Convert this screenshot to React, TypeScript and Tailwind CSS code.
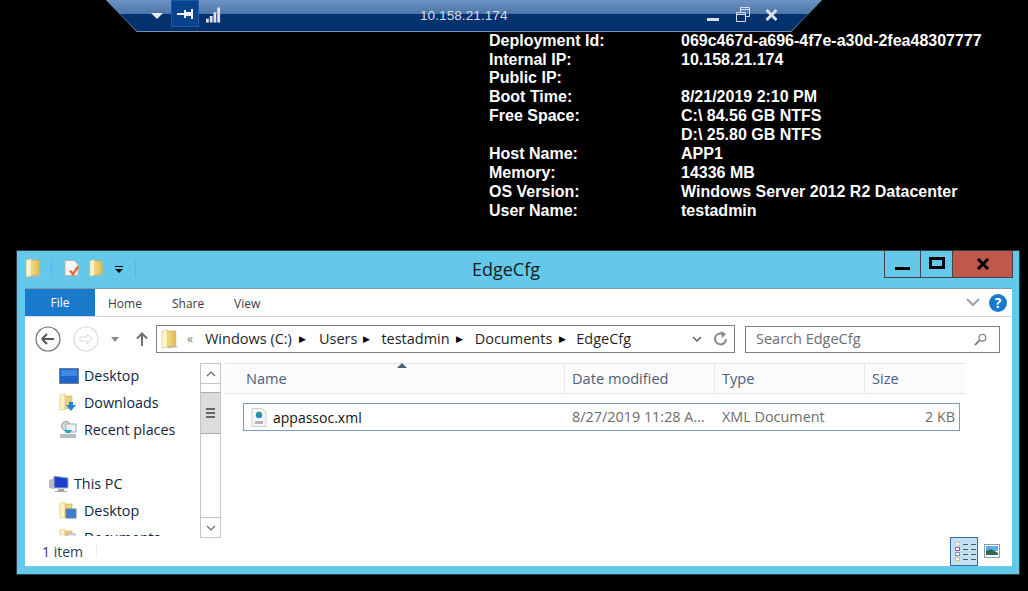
import React from "react";

const F = "font-['Open_Sans','Noto_Sans',sans-serif]";

function Folder({ className = "" }: { className?: string }) {
  return (
    <svg viewBox="0 0 17 19" className={className}>
      <defs>
        <linearGradient id="fg" x1="0" y1="0" x2="1" y2="0">
          <stop offset="0" stopColor="#f3dc8e" />
          <stop offset="1" stopColor="#e0bb52" />
        </linearGradient>
      </defs>
      <path d="M5 2H14V16L5 17Z" fill="url(#fg)" stroke="#c9a548" strokeWidth=".6" />
      <path d="M1 2L6 .6V17L1 18.4Z" fill="#fdf4c8" stroke="#dcc273" strokeWidth=".6" />
      <path d="M14 16L16.5 17L7 18.4L6 17Z" fill="#b9b7ad" />
    </svg>
  );
}

function TopBar() {
  return (
    <div className="ml-[106px] h-[32px] w-[716px] shrink-0 bg-[#7d93b0] [clip-path:polygon(0_0,100%_0,95.7%_100%,4.3%_100%)]">
      <div className="flex h-[31px] items-center bg-[linear-gradient(#6d93c2_0,#4c76a9_45%,#03326f_46%,#03326f_100%)] [clip-path:polygon(0_0,100%_0,95.7%_100%,4.3%_100%)]">
        <svg viewBox="0 0 12 8" className="ml-[45px] mt-[1px] h-[8px] w-[12px]">
          <path d="M0 1H12L6 7Z" fill="#e8ecf2" />
        </svg>
        <div className="ml-[8px] flex h-[27px] w-[28px] items-center justify-center self-start border border-[#1d5aa4] bg-[#07438e]">
          <svg viewBox="0 0 17 12" className="h-[12px] w-[17px]">
            <path d="M0 5H8V7H0ZM7 2H9V10H7ZM9 4H14V8H9ZM14 1H16V11H14Z" fill="#eef1f5" />
          </svg>
        </div>
        <svg viewBox="0 0 16 16" className="ml-[7px] mt-[-2px] h-[16px] w-[15px]">
          <path d="M0 12H3V16H0ZM4 9H7V16H4ZM8 5H11V16H8ZM12 0H15V16H12Z" fill="#dfe3e8" />
        </svg>
        <span className="ml-[199px] mt-[2px] font-['Liberation_Sans',sans-serif] text-[13.7px] text-[#d4dde8]">10.158.21.174</span>
        <svg viewBox="0 0 12 4" className="ml-[199px] mt-[9px] h-[4px] w-[12px]">
          <rect width="12" height="3" fill="#d9dee5" />
        </svg>
        <svg viewBox="0 0 14 15" className="ml-[17px] mt-[-2px] h-[15px] w-[14px]">
          <path d="M.5 5.5H9.5V14.5H.5ZM.5 7.5H9.5M4.5 5V.5H13.5V9.5H10M4.5 2.5H13.5" fill="none" stroke="#d9dee5" />
        </svg>
        <svg viewBox="0 0 13 12" className="ml-[15px] mt-[-2px] h-[12px] w-[13px]">
          <path d="M1.5 1 L11.5 11 M11.5 1 L1.5 11" stroke="#d9dee5" strokeWidth="3" />
        </svg>
      </div>
    </div>
  );
}

const rows: [string, string][] = [
  ["Deployment Id:", "069c467d-a696-4f7e-a30d-2fea48307777"],
  ["Internal IP:", "10.158.21.174"],
  ["Public IP:", ""],
  ["Boot Time:", "8/21/2019 2:10 PM"],
  ["Free Space:", "C:\\ 84.56 GB NTFS"],
  ["", "D:\\ 25.80 GB NTFS"],
  ["Host Name:", "APP1"],
  ["Memory:", "14336 MB"],
  ["OS Version:", "Windows Server 2012 R2 Datacenter"],
  ["User Name:", "testadmin"],
];

function Info() {
  return (
    <div className="ml-[489px] mt-[-1.4px] grid h-[188px] shrink-0 grid-cols-[192px_1fr] auto-rows-[18.9px] font-['Liberation_Sans',sans-serif] text-[16px] font-bold leading-[19px] text-white">
      {rows.map(([a, b], i) => (
        <React.Fragment key={i}>
          <div>{a}</div>
          <div>{b}</div>
        </React.Fragment>
      ))}
    </div>
  );
}

function TitleBar() {
  return (
    <div className="flex h-[37px] shrink-0 items-start">
      <Folder className="ml-[8px] mt-[7px] h-[20px] w-[18px]" />
      <div className="ml-[8px] mt-[10px] h-[16px] w-px bg-[#7fa9bf]" />
      <svg viewBox="0 0 16 18" className="ml-[12px] mt-[8px] h-[19px] w-[16px]">
        <path d="M1 1H10L14 5V16H1Z" fill="#f7f7f7" stroke="#b9b4ae" />
        <path d="M6 11L9 15L14 7" fill="none" stroke="#e46f3d" strokeWidth="2.4" />
      </svg>
      <Folder className="ml-[9px] mt-[7px] h-[20px] w-[16px]" />
      <svg viewBox="0 0 8 7" className="ml-[10px] mt-[15px] h-[7px] w-[8px]">
        <path d="M0 0H8V1H0ZM0 3H8L4 7Z" fill="#000" />
      </svg>
      <div className="ml-[12px] mt-[10px] h-[16px] w-px bg-[#7fa9bf]" />
      <div className={`${F} ml-[310px] mt-[6px] w-[120px] text-center text-[18px] leading-[24px] text-[#1a1a1a]`}>EdgeCfg</div>
      <div className="ml-auto mr-[6px] flex h-[27px] border border-t-0 border-[#444]">
        <div className="flex w-[36px] items-center justify-center border-r border-[#444]">
          <div className="mt-[8px] h-[3px] w-[15px] bg-black" />
        </div>
        <div className="flex w-[32px] items-center justify-center border-r border-[#444]">
          <div className="mb-[3px] h-[12px] w-[16px] border-[3px] border-black" />
        </div>
        <div className="flex w-[59px] items-center justify-center bg-[#c1584e]">
          <svg viewBox="0 0 13 12" className="mb-[1px] h-[12px] w-[14px]">
            <path d="M1.5 1 L11.5 11 M11.5 1 L1.5 11" stroke="#000" strokeWidth="3" />
          </svg>
        </div>
      </div>
    </div>
  );
}

function Tabs() {
  return (
    <div className={`${F} flex h-[28px] shrink-0 items-center border-b border-[#dadbdc] text-[12px] text-[#3c3c3c]`}>
      <div className="flex h-full w-[70px] items-center justify-center bg-[#1979ca] text-white">File</div>
      <div className="ml-[13px] mt-[3px] w-[50px]">Home</div>
      <div className="ml-[14px] mt-[3px] w-[48px]">Share</div>
      <div className="ml-[14px] mt-[3px]">View</div>
      <svg viewBox="0 0 14 9" className="ml-auto mr-[9px] h-[9px] w-[14px]">
        <path d="M1 1L7 7L13 1" fill="none" stroke="#9aa0a6" strokeWidth="2" />
      </svg>
      <div className="mr-[5px] flex h-[18px] w-[18px] items-center justify-center rounded-full bg-[#1979ca] text-[14px] font-bold text-white">?</div>
    </div>
  );
}

function AddressRow() {
  return (
    <div className={`${F} flex h-[44px] shrink-0 items-center text-[14.5px]`}>
      <svg viewBox="0 0 26 26" className="ml-[10px] h-[26px] w-[26px]">
        <circle cx="13" cy="13" r="12" fill="none" stroke="#6f6f6f" strokeWidth="1.2" />
        <path d="M7 13H19M7 13L12 8M7 13L12 18" fill="none" stroke="#555" strokeWidth="2" />
      </svg>
      <svg viewBox="0 0 26 26" className="ml-[12px] h-[26px] w-[26px]">
        <circle cx="13" cy="13" r="12" fill="none" stroke="#dcdcdc" strokeWidth="1.2" />
        <path d="M7 11H14V8L19 13L14 18V15H7Z" fill="none" stroke="#d8d8d8" />
      </svg>
      <svg viewBox="0 0 8 5" className="ml-[12px] h-[5px] w-[8px]">
        <path d="M0 0H8L4 5Z" fill="#8a8a8a" />
      </svg>
      <svg viewBox="0 0 12 14" className="ml-[17px] h-[14px] w-[12px]">
        <path d="M6 14V2M1 6.5L6 1.5L11 6.5" fill="none" stroke="#6e6e6e" strokeWidth="2" />
      </svg>
      <div className="ml-[8px] flex h-[28px] w-[579px] items-center border border-[#7f7f7f] text-[#1f1f1f]">
        <Folder className="ml-[4px] h-[20px] w-[18px]" />
        <span className="ml-[8px] text-[12px] text-[#777]">«</span>
        <span className="ml-[12px]">Windows (C:)</span>
        <span className="ml-[7px] text-[9px] text-black">▶</span>
        <span className="ml-[13px]">Users</span>
        <span className="ml-[6px] text-[9px] text-black">▶</span>
        <span className="ml-[11px]">testadmin</span>
        <span className="ml-[6px] text-[9px] text-black">▶</span>
        <span className="ml-[12px]">Documents</span>
        <span className="ml-[7px] text-[9px] text-black">▶</span>
        <span className="ml-[10px]">EdgeCfg</span>
        <svg viewBox="0 0 10 6" className="ml-auto h-[6px] w-[10px]">
          <path d="M1 1L5 5L9 1" fill="none" stroke="#666" strokeWidth="1.6" />
        </svg>
        <svg viewBox="0 0 16 16" className="ml-[11px] mr-[5px] h-[16px] w-[16px]">
          <path d="M13 8A5.5 5.5 0 1 1 10 3" fill="none" stroke="#8a8a8a" strokeWidth="2" />
          <path d="M8 0L13 3L9 7Z" fill="#8a8a8a" />
        </svg>
      </div>
      <div className="ml-[10px] flex h-[27px] w-[255px] items-center border border-[#7f7f7f] pl-[10px] pr-[12px] text-[#6d6d6d]">
        Search EdgeCfg
        <svg viewBox="0 0 14 14" className="ml-auto h-[13px] w-[13px]">
          <circle cx="9" cy="5" r="3.6" fill="none" stroke="#888" strokeWidth="1.4" />
          <path d="M6 8L1 13" stroke="#8a7a6a" strokeWidth="2" />
        </svg>
      </div>
    </div>
  );
}

function NavItem({ icon, label, indent = 34 }: { icon: React.ReactNode; label: string; indent?: number }) {
  return (
    <div className="flex h-[27px] items-center text-[14.3px] text-[#10253f]" style={{ paddingLeft: indent }}>
      <span className="flex w-[25px] shrink-0 items-center">{icon}</span>
      {label}
    </div>
  );
}

const DesktopIcon = () => (
  <svg viewBox="0 0 20 16" className="h-[16px] w-[20px]">
    <rect x=".5" y=".5" width="19" height="15" fill="#1e63c9" stroke="#6f7f95" />
    <rect x="2" y="2" width="16" height="6" fill="#3d8ae6" />
  </svg>
);
const DownloadsIcon = () => (
  <svg viewBox="0 0 18 19" className="h-[19px] w-[18px]">
    <path d="M5 3H13V15L5 16Z" fill="#ecd27f" stroke="#cfae52" strokeWidth=".6" />
    <path d="M1 2L6 1V16L1 17Z" fill="#fdf3c4" stroke="#d8bd6a" strokeWidth=".6" />
    <path d="M10 9H14V12H17L12 18L7 12H10Z" fill="#1e88d8" />
  </svg>
);
const RecentIcon = () => (
  <svg viewBox="0 0 18 18" className="h-[18px] w-[18px]">
    <circle cx="7" cy="5" r="4.5" fill="#d6dbe0" stroke="#8f979e" />
    <rect x="7" y="3" width="10" height="8" fill="#eef2f5" stroke="#a3abb2" />
    <path d="M5 9H13L11 12H7Z" fill="#1ea7c8" />
    <path d="M1 13H17V17H1Z" fill="#b7bcc1" />
  </svg>
);
const PcIcon = () => (
  <svg viewBox="0 0 20 18" className="h-[18px] w-[20px]">
    <path d="M0 5L5 3V14L0 13Z" fill="#b6bcc4" />
    <path d="M5 1L19 3V13L5 13Z" fill="#1a3fd0" stroke="#aab2ba" />
    <path d="M9 14H15V16H18V17H6V16H9Z" fill="#9ba3ab" />
  </svg>
);
const FolderDesk = () => (
  <svg viewBox="0 0 18 19" className="h-[19px] w-[18px]">
    <path d="M5 3H13V15L5 16Z" fill="#ecd27f" stroke="#cfae52" strokeWidth=".6" />
    <path d="M1 2L6 1V16L1 17Z" fill="#fdf3c4" stroke="#d8bd6a" strokeWidth=".6" />
    <rect x="7" y="8" width="10" height="9" fill="#3c7fd0" stroke="#69809a" />
  </svg>
);
const FolderDoc = () => (
  <svg viewBox="0 0 18 19" className="h-[19px] w-[18px]">
    <path d="M5 3H13V15L5 16Z" fill="#ecd27f" stroke="#cfae52" strokeWidth=".6" />
    <path d="M1 2L6 1V16L1 17Z" fill="#fdf3c4" stroke="#d8bd6a" strokeWidth=".6" />
    <rect x="8" y="6" width="8" height="11" fill="#e8ecef" stroke="#a8b0b8" />
  </svg>
);

function Nav() {
  return (
    <div className="h-full w-[175px] shrink-0 overflow-hidden">
      <div className="pt-[1px]">
        <NavItem icon={<DesktopIcon />} label="Desktop" />
        <NavItem icon={<DownloadsIcon />} label="Downloads" />
        <NavItem icon={<RecentIcon />} label="Recent places" />
        <div className="h-[27px]" />
        <NavItem icon={<PcIcon />} label="This PC" indent={24} />
        <NavItem icon={<FolderDesk />} label="Desktop" />
        <NavItem icon={<FolderDoc />} label="Documents" />
      </div>
    </div>
  );
}

function Scroll() {
  return (
    <div className="mt-[2px] flex h-[175px] w-[21px] shrink-0 flex-col border border-[#c4c4c4]">
      <div className="flex h-[20px] items-center justify-center border-b border-[#c4c4c4]">
        <svg viewBox="0 0 10 6" className="h-[6px] w-[10px]"><path d="M1 5L5 1L9 5" fill="none" stroke="#6a6a6a" strokeWidth="1.2" /></svg>
      </div>
      <div className="mt-[8px] flex h-[42px] flex-col items-center justify-center gap-[2px] border-y border-[#adadad] bg-[#dcdcdc]">
        <div className="h-[2px] w-[9px] bg-[#666]" />
        <div className="h-[2px] w-[9px] bg-[#666]" />
        <div className="h-[2px] w-[9px] bg-[#666]" />
      </div>
      <div className="mt-auto flex h-[20px] items-center justify-center border-t border-[#c4c4c4]">
        <svg viewBox="0 0 10 6" className="h-[6px] w-[10px]"><path d="M1 1L5 5L9 1" fill="none" stroke="#6a6a6a" strokeWidth="1.2" /></svg>
      </div>
    </div>
  );
}

function Files() {
  return (
    <div className="ml-[4px] mt-[2px] flex w-[740px] shrink-0 flex-col">
      <div className="relative flex h-[31px] items-center border-y border-[#e5e5e5] bg-[#fbfbfb] text-[14.6px] text-[#4c607a]">
        <div className="absolute left-[172px] top-[-1px] h-0 w-0 border-x-[5px] border-b-[5px] border-x-transparent border-b-[#4c607a]" />
        <div className="flex h-full w-[340px] items-center border-r border-[#e5e5e5] pl-[21px]">Name</div>
        <div className="flex h-full w-[150px] items-center border-r border-[#e5e5e5] pl-[7px]">Date modified</div>
        <div className="flex h-full w-[150px] items-center border-r border-[#e5e5e5] pl-[7px]">Type</div>
        <div className="flex h-full flex-1 items-center pl-[7px]">Size</div>
      </div>
      <div className="ml-[18px] mt-[9px] flex h-[28px] w-[717px] items-center border border-[#7b9ac4] text-[14.4px]">
        <svg viewBox="0 0 16 19" className="ml-[7px] h-[19px] w-[16px]">
          <path d="M1 .5H11L15 4V18.5H1Z" fill="#f6f6f6" stroke="#d0d0d0" />
          <circle cx="8" cy="7" r="3.2" fill="#1c8fc8" />
          <path d="M6 5H9V8H6Z" fill="#3aa648" />
          <rect x="4" y="13" width="8" height="3" fill="#b5b5b5" />
        </svg>
        <span className="ml-[6px] w-[299px] text-[14px] text-[#111]">appassoc.xml</span>
        <span className="w-[150px] text-[#6d6d6d]">8/27/2019 11:28 A...</span>
        <span className="w-[120px] text-[#6d6d6d]">XML Document</span>
        <span className="flex-1 pr-[4px] text-right text-[#6d6d6d]">2 KB</span>
      </div>
    </div>
  );
}

function StatusBar() {
  return (
    <div className="flex h-[30px] shrink-0 items-center text-[14px] text-[#2c3e5c]">
      <span className="ml-[17px]">1 item</span>
      <div className="ml-[13px] h-[14px] w-px bg-[#eeeeee]" />
      <div className="ml-auto mr-[6px] mt-[1px] flex h-[29px] w-[28px] flex-col justify-center gap-[1px] self-start border border-[#3c6a96] bg-[#c3e1f5] pl-[4px]">
        {["#c8c8c8", "#d8534a", "#7a94d8", "#c6c66a"].map((c, i) => (
          <div key={i} className="flex items-center gap-[3px]">
            <div className="h-[4px] w-[5px] border bg-white" style={{ borderColor: c }} />
            <div className="h-px w-[5px] bg-[#4a5a6a]" />
            <div className="h-px w-[5px] bg-[#4a5a6a]" />
          </div>
        ))}
      </div>
      <svg viewBox="0 0 16 14" className="mr-[12px] mt-[-1px] h-[14px] w-[16px]">
        <rect x=".5" y=".5" width="15" height="13" fill="#fff" stroke="#8b9bb0" />
        <rect x="2" y="2" width="12" height="5" fill="#56aef0" />
        <path d="M2 7L7 5L14 9V11H2Z" fill="#2e6b4a" />
      </svg>
    </div>
  );
}

function Explorer() {
  return (
    <div className={`${F} ml-[16px] mt-[31.4px] flex h-[325px] w-[1004px] shrink-0 flex-col border border-[#2c3a44] bg-[#63c8ea]`}>
      <TitleBar />
      <div className="ml-[8px] mr-[7px] flex h-[278px] shrink-0 flex-col border-t border-[#7f9db0] bg-white">
        <Tabs />
        <AddressRow />
        <div className="flex min-h-0 flex-1">
          <Nav />
          <Scroll />
          <Files />
        </div>
        <StatusBar />
      </div>
    </div>
  );
}

export default function App() {
  return (
    <div className="flex h-[591px] w-[1028px] flex-col overflow-hidden bg-black">
      <TopBar />
      <Info />
      <Explorer />
    </div>
  );
}
